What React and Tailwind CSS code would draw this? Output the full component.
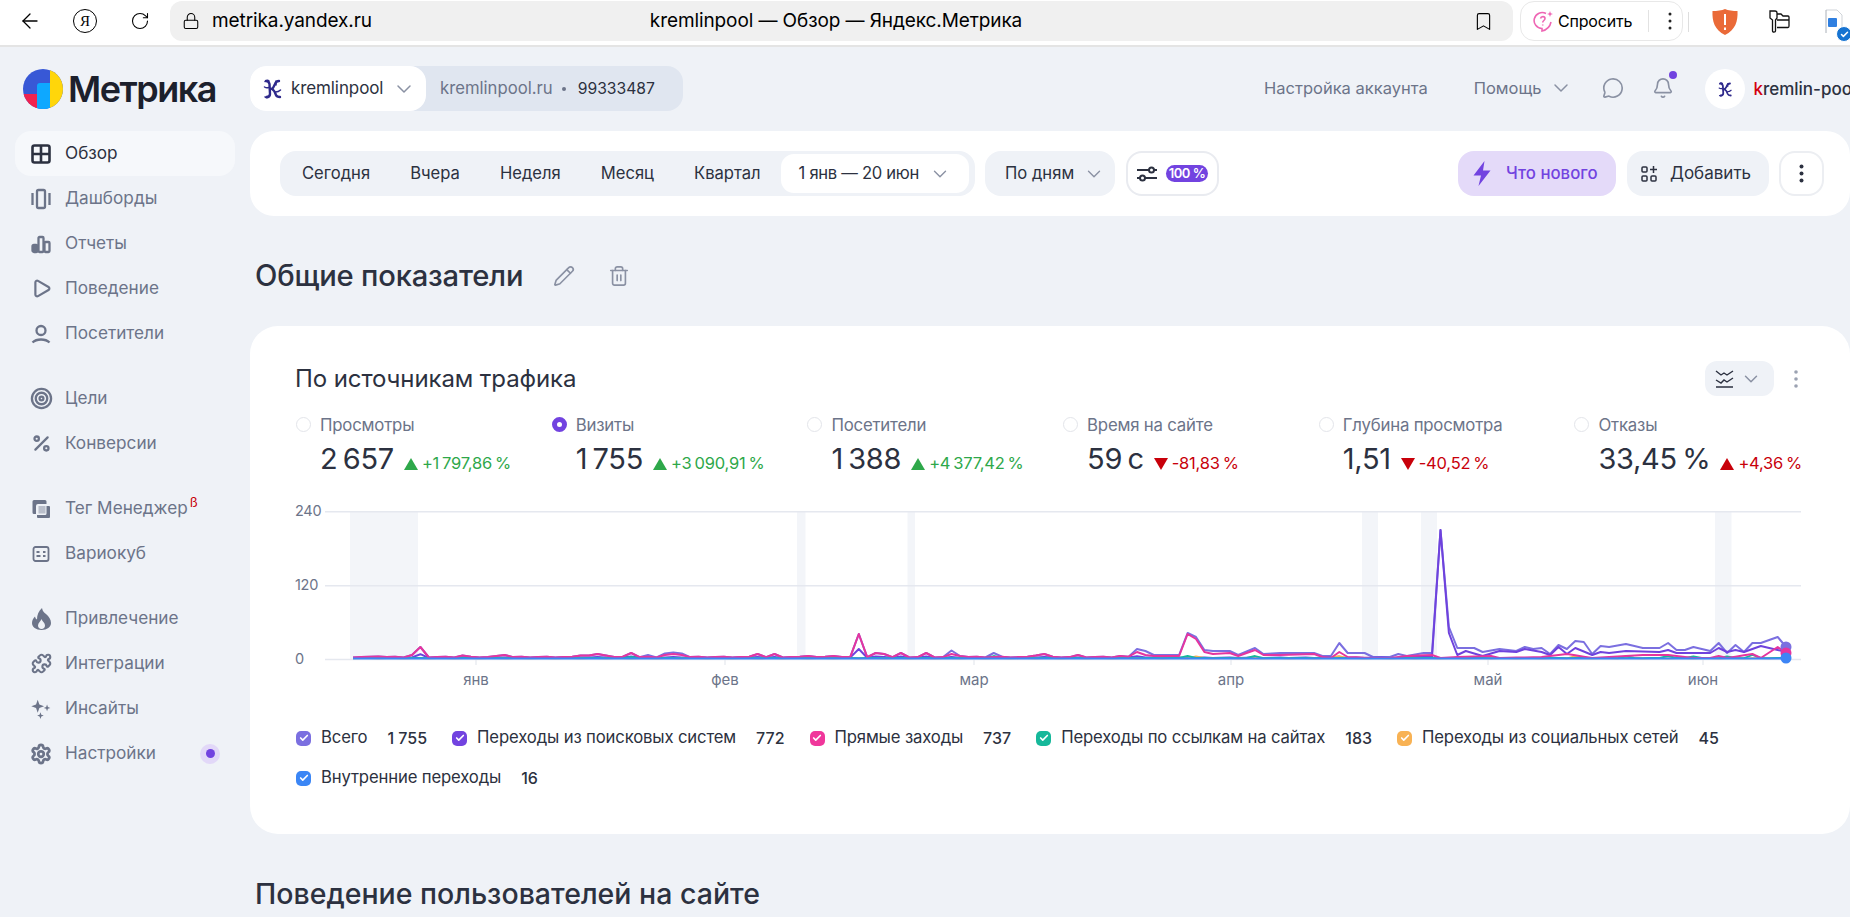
import React from "react";
import {
  ArrowLeft, RotateCw, Lock, Bookmark, ChevronDown, MessageCircle, Bell, Pencil, Trash2,
  Play, Target, Percent, Puzzle, Settings, Check,
} from "lucide-react";

const z6 = (x) => x / 1.96 + 280;
const z7 = (x) => x / 1.96 + 1050;
const X0 = 353;
const STEP = 8.43;
const DAYS = 171;
const idx = (x) => Math.max(0, Math.min(DAYS - 1, Math.round((x - X0) / STEP)));

function series(spikes, late, base, jitter) {
  const h = Array.from({ length: DAYS }, (_, i) => base + ((i * 7) % 3) * jitter);
  spikes.forEach(([x, v]) => {
    h[idx(x)] = v;
  });
  for (let a = 0; a < late.length - 1; a++) {
    const i0 = idx(late[a][0]);
    const i1 = idx(late[a + 1][0]);
    for (let i = i0; i <= i1; i++) {
      const t = i1 === i0 ? 0 : (i - i0) / (i1 - i0);
      h[i] = late[a][1] + (late[a + 1][1] - late[a][1]) * t;
    }
  }
  return h.map((v, i) => `${(X0 + i * STEP - 325).toFixed(1)},${(148 - v).toFixed(1)}`).join(" ");
}

const earlyPink = [
  [z6(160), 2], [z6(195), 2.5], [z6(255), 4], [z6(277), 12], [z6(360), 3.5], [z6(440), 4], [z6(425), 3], [z6(585), 3.5], [z6(605), 3.5],
  [z6(625), 5], [z6(640), 3.5], [z6(690), 6], [z6(750), 4], [z6(765), 5], [z6(785), 4], [z6(938), 5], [z6(970), 5], [z6(1035), 3],
  [z6(1085), 3], [z6(1137), 25], [z6(1170), 6], [z6(1185), 5], [z6(1218), 6], [z6(1268), 6], [z6(1318), 5], [z6(1335), 3],
  [z6(1480), 3.5], [z6(1495), 5], [z6(1565), 5], [z7(55), 4], [z7(140), 3], [z7(175), 7], [z7(190), 4],
];
const earlyTotal = [
  ...earlyPink, [z6(720), 4], [z6(750), 5.5], [z6(765), 6.5], [z6(785), 5.5], [z6(1318), 8.5], [z6(1400), 6],
  [z7(175), 10], [z7(190), 8],
];
const lateTotal = [
  [z7(205), 4], [z7(250), 4], [z7(270), 26], [z7(288), 22], [z7(305), 9], [z7(320), 8], [z7(350), 8], [z7(370), 4], [z7(405), 11], [z7(425), 5], [z7(450), 6],
  [z7(510), 6], [z7(530), 3], [z7(550), 3], [z7(568), 16], [z7(590), 6], [z7(610), 6], [z7(625), 2], [z7(660), 2], [z7(685), 5], [z7(700), 3], [z7(730), 6],
  [z7(750), 6], [z7(767), 129], [z7(783), 32], [z7(800), 11], [z7(830), 11], [z7(850), 7], [z7(880), 10], [z7(910), 8], [z7(930), 12], [z7(950), 10],
  [z7(965), 11], [z7(980), 5], [z7(998), 14], [z7(1015), 10], [z7(1033), 18], [z7(1050), 17], [z7(1065), 5], [z7(1082), 13], [z7(1100), 12], [z7(1130), 15],
  [z7(1165), 11], [z7(1195), 11], [z7(1212), 16], [z7(1230), 9], [z7(1247), 9], [z7(1262), 12], [z7(1295), 8], [z7(1312), 16], [z7(1330), 6], [z7(1347), 14],
  [z7(1365), 7], [z7(1380), 16], [z7(1395), 16], [z7(1425), 22], [z7(1443), 12],
];
const lateSearch = [
  [z7(700), 2], [z7(730), 2], [z7(750), 2], [z7(767), 129], [z7(783), 26], [z7(800), 4], [z7(815), 8], [z7(850), 3], [z7(880), 8], [z7(910), 7], [z7(930), 10],
  [z7(965), 7], [z7(980), 4], [z7(998), 12], [z7(1015), 5], [z7(1033), 11], [z7(1065), 4], [z7(1082), 7], [z7(1100), 6], [z7(1130), 8], [z7(1195), 7],
  [z7(1212), 9], [z7(1230), 6], [z7(1295), 6], [z7(1312), 11], [z7(1330), 7], [z7(1347), 9], [z7(1365), 7], [z7(1395), 13], [z7(1443), 7],
];
const latePink = [
  [z7(205), 3], [z7(250), 3], [z7(270), 25], [z7(288), 20], [z7(305), 7], [z7(320), 5], [z7(350), 6], [z7(370), 3], [z7(405), 9], [z7(425), 4], [z7(450), 4],
  [z7(510), 5], [z7(530), 2], [z7(550), 1], [z7(568), 7], [z7(590), 2], [z7(625), 1], [z7(660), 1], [z7(700), 3], [z7(750), 4], [z7(767), 1],
  [z7(800), 2], [z7(860), 3], [z7(880), 1], [z7(960), 2], [z7(1015), 5], [z7(1065), 1], [z7(1165), 4], [z7(1212), 4], [z7(1262), 1], [z7(1295), 1], [z7(1312), 3],
  [z7(1330), 1], [z7(1380), 5], [z7(1395), 1], [z7(1425), 12], [z7(1443), 6],
];
const TOTAL = series(earlyTotal, lateTotal, 1.5, 0.4);
const SEARCH = series(earlyPink.map(([x, v]) => [x, Math.max(1, v * 0.4)]), lateSearch, 1, 0.3);
const PINK = series(earlyPink, latePink, 1.5, 0.4);
const GREEN = series([[z6(690), 2], [z6(1400), 3], [z7(268), 3], [z7(405), 3], [z7(1130), 2.5], [z7(1212), 3], [z7(1262), 2.5], [z7(1330), 2.5], [z7(1380), 4]], [], 0.8, 0.2);
const ORANGE = series([[z7(290), 2.5], [z7(568), 3], [z7(1030), 3], [z7(1130), 2]], [], 0.6, 0.2);
const BLUE = series([], [], 0.5, 0);

const bands = [[350, 418], [797, 805.5], [907.5, 915], [1362, 1378], [1421, 1437], [1715, 1731.5]];
const ticks = [476, 725, 974, 1231, 1488, 1703];

const ic = "shrink-0";

const I = {
  grid: (
    <svg width="20" height="20" viewBox="0 0 20 20" className={ic} fill="none" stroke="#2c3140" strokeWidth="2.6">
      <rect x="1.5" y="1.5" width="17" height="17" rx="2" />
      <path d="M10 2v16M2 10h16" />
    </svg>
  ),
  dash: (
    <svg width="22" height="22" viewBox="0 0 22 22" className={ic} fill="none" stroke="#6c7489" strokeWidth="2.3">
      <rect x="7" y="2" width="8" height="18" rx="1.5" />
      <path d="M2.5 5v12M19.5 5v12" />
    </svg>
  ),
  bars: (
    <svg width="20" height="20" viewBox="0 0 20 20" className={ic} fill="none" stroke="#6c7489" strokeWidth="2.3">
      <rect x="1.5" y="11" width="5" height="7" rx="1.5" fill="#6c7489" />
      <rect x="7.5" y="3" width="5" height="15" rx="1" />
      <rect x="13.5" y="8" width="5" height="10" rx="1" />
    </svg>
  ),
  user: (
    <svg width="20" height="20" viewBox="0 0 20 20" className={ic} fill="none" stroke="#6c7489" strokeWidth="2.3">
      <circle cx="10" cy="6.500" r="4.500" />
      <path d="M1.500 18.500c2-2 5-3 8.500-3s6.500 1 8.500 3" />
    </svg>
  ),
  tag: (
    <svg width="20" height="20" viewBox="0 0 20 20" className={ic} fill="#6c7489">
      <path d="M3 1h11a1.500 1.500 0 0 1 1.500 1.500V5H7a2 2 0 0 0-2 2v8H3a1.500 1.500 0 0 1-1.500-1.500v-11A1.500 1.500 0 0 1 3 1z" />
      <path d="M7 7h11a1 1 0 0 1 1 1v10a1 1 0 0 1-1 1H7a1 1 0 0 1-1-1v-2h8a1.500 1.500 0 0 0 1.500-1.500V7z" />
      <rect x="7.500" y="7" width="7" height="7.500" fill="#6c7489" opacity="0.4" />
    </svg>
  ),
  vario: (
    <svg width="18" height="18" viewBox="0 0 18 18" className={ic} fill="none" stroke="#6c7489" strokeWidth="1.800">
      <rect x="1.500" y="2" width="15" height="14" rx="2" />
      <path d="M4.500 7h3M11 7h2.500M4.500 11h4M11 11h2.500" />
    </svg>
  ),
  flame: (
    <svg width="21" height="22" viewBox="0 0 21 22" className={ic}>
      <path d="M11 0c.6 3.500 2.200 4.500 4 6 3 2.500 5 5.500 5 9 0 4-4 7-9.500 7S1 19 1 15c0-3 1.500-5 3-6.500.3 1.500 1 2.500 2 3C6 7 7.500 3 11 0z" fill="#6c7489" />
      <path d="M10.500 11c.5 2 3.500 3.500 3.500 6.500 0 2-1.500 3.500-3.500 3.500S7 19.500 7 17.500c0-2.500 2.500-4 3.500-6.500z" fill="#eff2f7" />
    </svg>
  ),
  spark: (
    <svg width="22" height="22" viewBox="0 0 20 20" className={ic} fill="#6c7489">
      <path d="M7 1.500l1.500 4.300L12.800 7.500 8.500 9.200 7 13.500 5.500 9.200 1.200 7.500l4.300-1.700z" />
      <path d="M15.500 6l.8 2.200 2.200.8-2.200.8-.8 2.200-.8-2.200-2.200-.8 2.200-.8z" />
      <path d="M9.500 13l.8 2.200 2.200.8-2.200.8-.8 2.200-.8-2.200-2.200-.8 2.200-.8z" />
    </svg>
  ),
};

const nav = [
  [
    ["Обзор", I.grid, true],
    ["Дашборды", I.dash],
    ["Отчеты", I.bars],
    ["Поведение", <Play size={21} strokeWidth={2.5} className={ic} />],
    ["Посетители", I.user],
  ],
  [
    ["Цели", <Target size={23} strokeWidth={2.4} className={ic} />],
    ["Конверсии", <Percent size={21} strokeWidth={2.6} className={ic} />],
  ],
  [
    ["Тег Менеджер", I.tag, false, "ß"],
    ["Вариокуб", I.vario],
  ],
  [
    ["Привлечение", I.flame],
    ["Интеграции", <Puzzle size={21} strokeWidth={2.4} className={ic} />],
    ["Инсайты", I.spark],
    ["Настройки", <Settings size={22} strokeWidth={3} className={ic} />, false, null, true],
  ],
];

function KLogo({ size = 20 }) {
  return (
    <svg width={size} height={size + 2} viewBox="0 0 20 22" fill="none" stroke="#2f2a8c" strokeWidth="2.400" strokeLinecap="round" className="shrink-0">
      <path d="M3 3c2 0 3 1 3.500 3L7 16c0 2-1.500 3-3.500 3" />
      <path d="M2 3.500c1.500-1.500 3-1.500 4-.5M2 19c1.500 1 3 .8 4-.5" strokeWidth="1.500" />
      <path d="M7 11c3 0 3-1 5-5 .7-2 2-3 4-3" />
      <path d="M9 11c2 1 3 3 4 6 .600 1.500 2 2 4 2" />
      <path d="M1.500 9c1.500 1 3 1 4 .5M13 3v4M12.500 14c2 0 3.500-.5 5-2" strokeWidth="1.500" />
    </svg>
  );
}

function Logo() {
  return (
    <svg width="40" height="40" viewBox="0 0 40 40" className="shrink-0">
      <defs>
        <clipPath id="lc"><circle cx="20" cy="20" r="20" /></clipPath>
      </defs>
      <g clipPath="url(#lc)">
        <rect width="40" height="40" fill="#3858d6" />
        <rect y="25" width="14" height="15" fill="#f0234f" />
        <rect x="27" width="13" height="40" fill="#ffd60a" />
        <path d="M14 40V17a3 3 0 0 1 3-3h10v26z" fill="#0ea8ff" />
      </g>
    </svg>
  );
}

function Diff({ up, good, value }) {
  const color = good ? "text-[#2ea84a]" : "text-[#c8000a]";
  return (
    <span className={`flex items-center gap-[4px] text-[16.500px] mt-[9px] tracking-[-0.2px] [word-spacing:-1.500px] ${color}`}>
      <svg width="14" height="14" viewBox="0 0 14 14" fill="currentColor" className="shrink-0">
        {up ? <path d="M7 1 14 13H0z" /> : <path d="M7 13 14 1H0z" />}
      </svg>
      {value}
    </span>
  );
}

function Metric({ label, value, diff, up, good, active }) {
  return (
    <div className="w-[255.700px] shrink-0 pl-[24px] relative">
      <span
        className={
          active
            ? "absolute left-0 top-[5px] w-[15px] h-[15px] rounded-full border-[5px] border-[#7243e0] bg-white"
            : "absolute left-0 top-[5px] w-[15px] h-[15px] rounded-full border border-[#e3e5ea] bg-white"
        }
      />
      <div className="h-[26px] leading-[26px] text-[16.800px] text-[#6c7489] whitespace-nowrap tracking-[-0.2px]">{label}</div>
      <div className="flex items-center gap-[10px] h-[42px] whitespace-nowrap">
        <span className="text-[29px] text-[#2c3140] tracking-[-0.3px] [word-spacing:-2.500px]">{value}</span>
        <Diff up={up} good={good} value={diff} />
      </div>
    </div>
  );
}

function Legend({ color, label, value }) {
  return (
    <div className="flex items-center h-[24px] whitespace-nowrap">
      <span className={`flex items-center justify-center w-[15px] h-[15px] rounded-[5px] text-white ${color}`}>
        <Check size={10} strokeWidth={4} />
      </span>
      <span className="ml-[10px] text-[16.700px] text-[#2c3140] tracking-[-0.15px]">{label}</span>
      <span className="ml-[20px] text-[16px] font-medium text-[#2c3140]">{value}</span>
    </div>
  );
}

export default function App() {
  return (
    <div className="w-[1850px] h-[917px] overflow-hidden flex flex-col bg-[#eff2f7] font-['Inter','Noto_Sans',sans-serif] text-[#2c3140]">
      {/* browser bar */}
      <div className="h-[47px] shrink-0 bg-white border-b-2 border-[#e4e4e4] flex items-start pt-[1px] text-black">
        <ArrowLeft size={24} strokeWidth={1.3} className="ml-[18px] mt-[8px] shrink-0" />
        <span className="ml-[31px] mt-[8px] w-[24px] h-[24px] rounded-full border border-black flex items-center justify-center text-[15px] font-['Liberation_Serif',serif] shrink-0">Я</span>
        <RotateCw size={20} strokeWidth={1.3} className="ml-[33px] mt-[10px] shrink-0" />
        <div className="ml-[20px] w-[1343px] h-[40px] rounded-[12px] bg-[#f0f0f0] flex items-center pl-[12px] shrink-0">
          <Lock size={18} strokeWidth={1.4} className="shrink-0" />
          <span className="ml-[12px] text-[19px] tracking-[-0.1px]">metrika.yandex.ru</span>
          <span className="ml-[278px] text-[19px] tracking-[-0.1px] whitespace-nowrap">kremlinpool — Обзор — Яндекс.Метрика</span>
          <Bookmark size={21} strokeWidth={1.3} className="ml-auto mr-[19px] shrink-0" />
        </div>
        <div className="ml-[7px] w-[163px] h-[40px] shrink-0 rounded-[14px] border border-[#e8e8e8] flex items-center pl-[12px]">
          <svg width="21" height="22" viewBox="0 0 21 22" fill="none" stroke="#ee66b4" strokeWidth="1.600" className="shrink-0">
            <path d="M13 3.500A8 8 0 1 0 9 18.500v2.500c4-1 8-4 9-9" />
            <path d="M7.500 8.500c.5-2.500 4.500-2.500 4.500 0 0 2-2.300 2-2.300 4M9.700 14.500v1" />
            <path d="M17 1l.8 2.200L20 4l-2.200.8L17 7l-.8-2.200L14 4l2.200-.8z" fill="#ee66b4" stroke="none" />
          </svg>
          <span className="ml-[4px] text-[16px] tracking-[-0.2px]">Спросить</span>
          <span className="ml-[16px] w-px h-[22px] bg-[#e2e2e2]" />
          <svg width="4" height="18" viewBox="0 0 4 18" fill="#222" className="ml-[19px]">
            <circle cx="2" cy="2" r="1.500" /><circle cx="2" cy="9" r="1.500" /><circle cx="2" cy="16" r="1.500" />
          </svg>
        </div>
        <span className="ml-[5px] mt-[11px] w-px h-[20px] bg-[#dedede] shrink-0" />
        <svg width="26" height="26" viewBox="0 0 26 26" className="ml-[23px] mt-[8px] shrink-0">
          <path d="M13 0c3 1.500 8 2 12.500 2 .5 10-2 19-12.500 24C2.500 21 0 12 .5 2 5 2 10 1.500 13 0z" fill="#ea6a38" />
          <path d="M12 5h2v11h-2zM12 18.500h2v2.500h-2z" fill="#fff" />
        </svg>
        <svg width="22" height="24" viewBox="0 0 22 24" fill="none" stroke="#111" strokeWidth="1.300" className="ml-[30px] mt-[9px] shrink-0">
          <path d="M2 1h5c1.500 0 2 1 2 2v5l-1.500 2v11c0 1.500-3 1.500-3 0V10L2 8V3c0-1 0-2 0-2z" />
          <path d="M9 4h4l2 2h5c1 0 1 .5 1 1v9c0 1-.5 1.500-1 1.500H9M9 10h12" />
        </svg>
        <div className="ml-[35px] mt-[8px] w-[26px] h-[32px] relative shrink-0">
          <svg width="18" height="26" viewBox="0 0 18 26" fill="none" className="absolute left-0 top-0">
            <path d="M1 1h11l5 5v17" stroke="#cfd3d8" strokeWidth="1" />
            <path d="M1 1v23" stroke="#aab0b8" strokeWidth="1" />
            <rect x="3" y="9" width="9" height="9" rx="1" fill="#2f7fe0" />
          </svg>
          <span className="absolute left-[11px] top-[17px] w-[16px] h-[16px] rounded-full bg-[#1673d1] border border-white flex items-center justify-center text-white">
            <Check size={9} strokeWidth={4} />
          </span>
        </div>
      </div>

      {/* body */}
      <div className="flex flex-1 min-h-0">
        <aside className="w-[250px] shrink-0 flex flex-col">
          <div className="flex items-center h-[84px] pl-[23px] gap-[5px]">
            <Logo />
            <span className="text-[36px] font-semibold text-[#1c202c] tracking-[-1.500px]">Метрика</span>
          </div>
          <nav className="w-[220px] ml-[15px] flex flex-col gap-[20px]">
            {nav.map((group, g) => (
              <div key={g} className="flex flex-col">
                {group.map(([label, icon, active, sup, dot]) => (
                  <div
                    key={label}
                    className={
                      active
                        ? "h-[45px] flex items-center pl-[15px] rounded-[16px] bg-[#f6f8fb] text-[#2c3140]"
                        : "h-[45px] flex items-center pl-[15px] rounded-[16px] text-[#6c7489]"
                    }
                  >
                    <span className="w-[22px] flex justify-center shrink-0">{icon}</span>
                    <span className="ml-[13px] mb-[2px] text-[17.200px] font-normal whitespace-nowrap">{label}</span>
                    {sup && <span className="ml-[2px] -mt-[12px] text-[13px] text-[#c8000a] leading-none">{sup}</span>}
                    {dot && (
                      <span className="ml-auto mr-[15px] w-[20px] h-[20px] rounded-full bg-[#e2d8f8] flex items-center justify-center">
                        <span className="w-[9px] h-[9px] rounded-full bg-[#7243e0]" />
                      </span>
                    )}
                  </div>
                ))}
              </div>
            ))}
          </nav>
        </aside>

        <main className="w-[1600px] shrink-0 flex flex-col">
          {/* header */}
          <div className="h-[84px] shrink-0 flex items-start pt-[19px] whitespace-nowrap overflow-hidden">
            <div className="w-[433px] h-[45px] rounded-[16px] bg-[#e0e6f0] flex items-center shrink-0">
              <div className="w-[176px] h-[45px] rounded-[16px] bg-white flex items-center pl-[13px] shrink-0">
                <KLogo />
                <span className="ml-[8px] text-[17px] tracking-[-0.1px]">kremlinpool</span>
                <ChevronDown size={24} strokeWidth={1.5} className="ml-[9px] text-[#8a91a3]" />
              </div>
              <span className="ml-[14px] text-[16.700px] text-[#6c7489]">kremlinpool.ru</span>
              <span className="ml-[9px] w-[4px] h-[4px] rounded-full bg-[#6c7489]" />
              <span className="ml-[12px] text-[15.700px]">99333487</span>
            </div>
            <span className="ml-[581px] mt-[10px] text-[16.500px] text-[#6c7489] shrink-0">Настройка аккаунта</span>
            <span className="ml-[46px] mt-[10px] text-[16.500px] text-[#6c7489] shrink-0">Помощь</span>
            <ChevronDown size={24} strokeWidth={1.5} className="ml-[8px] mt-[10px] text-[#8a91a3] shrink-0" />
            <MessageCircle size={22} strokeWidth={1.8} className="ml-[29px] mt-[11px] text-[#8a91a3] shrink-0" />
            <div className="relative ml-[28px] mt-[11px] shrink-0 w-[22px] h-[24px]">
              <Bell size={22} strokeWidth={1.8} className="text-[#8a91a3]" />
              <span className="absolute -right-[3px] -top-[6px] w-[8px] h-[8px] rounded-full bg-[#7243e0]" />
            </div>
            <span className="ml-[31px] mt-[3px] w-[40px] h-[40px] rounded-full bg-white flex items-center justify-center shrink-0">
              <KLogo size={15} />
            </span>
            <span className="ml-[8px] mt-[11px] text-[17px] font-medium shrink-0">
              <span className="text-[#d4000f]">k</span>remlin-pool
            </span>
          </div>

          {/* filter card */}
          <div className="h-[85px] shrink-0 bg-white rounded-[24px] flex items-center pl-[30px] pr-[26px]">
            <div className="w-[695px] h-[45px] rounded-[16px] bg-[#eff2f7] flex items-center pl-[22px] gap-[40px] shrink-0 text-[16.600px]">
              <span>Сегодня</span>
              <span>Вчера</span>
              <span>Неделя</span>
              <span>Месяц</span>
              <span>Квартал</span>
              <div className="-ml-[23px] w-[194px] shrink-0 h-[45px] rounded-[16px] bg-white border-[3px] border-[#eff2f7] flex items-center pl-[18px] whitespace-nowrap">
                <span className="tracking-[-0.3px]">1 янв — 20 июн</span>
                <ChevronDown size={22} strokeWidth={1.5} className="ml-[10px] text-[#8a91a3]" />
              </div>
            </div>
            <div className="ml-[10px] w-[130px] h-[45px] rounded-[16px] bg-[#eff2f7] flex items-center pl-[20px] text-[16.600px] shrink-0">
              <span>По дням</span>
              <ChevronDown size={22} strokeWidth={1.5} className="ml-[9px] text-[#8a91a3]" />
            </div>
            <div className="ml-[11px] w-[93px] h-[45px] rounded-[16px] border-2 border-[#e9ebf0] flex items-center pl-[8px] shrink-0">
              <svg width="22" height="18" viewBox="0 0 22 18" fill="none" stroke="#2c3140" strokeWidth="2" className="shrink-0">
                <path d="M1 5h12M18 5h3M1 13h3M9 13h12" />
                <circle cx="15.500" cy="5" r="2.500" />
                <circle cx="6.500" cy="13" r="2.500" />
              </svg>
              <span className="ml-[8px] w-[42px] h-[17px] rounded-full bg-[#7243e0] text-white text-[13px] font-semibold flex items-center justify-center tracking-[-0.5px]">100 %</span>
            </div>
            <div className="ml-auto w-[158px] h-[45px] rounded-[16px] bg-[#e4daf9] flex items-center pl-[15px] text-[#7243e0] shrink-0">
              <svg width="18" height="25" viewBox="0 0 18 25" fill="#7243e0" className="shrink-0">
                <path d="M11.500 0 .5 14.500H8L5.500 25 17.500 9.500H10z" />
              </svg>
              <span className="ml-[15px] text-[16.800px] font-medium whitespace-nowrap">Что нового</span>
            </div>
            <div className="ml-[11px] w-[142px] h-[45px] rounded-[16px] bg-[#eff2f7] flex items-center pl-[14px] shrink-0">
              <svg width="16" height="16" viewBox="0 0 16 16" fill="none" stroke="#2c3140" strokeWidth="1.500" className="shrink-0">
                <rect x="1" y="1" width="5" height="5" rx="1" />
                <rect x="1" y="10" width="5" height="5" rx="1" />
                <rect x="10" y="10" width="5" height="5" rx="1" />
                <path d="M12.500 0v7M9 3.500h7" />
              </svg>
              <span className="ml-[13px] text-[17px] whitespace-nowrap">Добавить</span>
            </div>
            <div className="ml-[10px] w-[45px] h-[45px] rounded-[16px] border-2 border-[#eceef2] flex items-center justify-center shrink-0">
              <svg width="5" height="19" viewBox="0 0 5 19" fill="#2c3140">
                <circle cx="2.500" cy="2.500" r="2" /><circle cx="2.500" cy="9.500" r="2" /><circle cx="2.500" cy="16.500" r="2" />
              </svg>
            </div>
          </div>

          {/* heading */}
          <div className="h-[110px] shrink-0 flex items-center pl-[5px] pt-[10px]">
            <h1 className="text-[29.200px] font-medium tracking-[-0.2px]">Общие показатели</h1>
            <Pencil size={22} strokeWidth={1.8} className="ml-[30px] text-[#8a91a3]" />
            <Trash2 size={22} strokeWidth={1.8} className="ml-[33px] text-[#8a91a3]" />
          </div>

          {/* card */}
          <section className="h-[508px] shrink-0 bg-white rounded-[28px] pl-[45px] pt-[35px] flex flex-col">
            <div className="h-[35px] flex items-center shrink-0 pr-[52px]">
              <h2 className="text-[24px] font-normal tracking-[-0.1px]">По источникам трафика</h2>
              <div className="ml-auto w-[69px] h-[35px] rounded-[12px] bg-[#eff2f7] flex items-center pl-[10px]">
                <svg width="19" height="20" viewBox="0 0 19 20" fill="none" stroke="#2c3140" strokeWidth="1.400" className="shrink-0">
                  <path d="M1 2l5 4 3-2 3 2 6-4M1 11l5 3 3-3 3 2 6-4M1 18h17" />
                </svg>
                <ChevronDown size={22} strokeWidth={1.6} className="ml-[6px] text-[#8a91a3]" />
              </div>
              <svg width="4" height="18" viewBox="0 0 4 18" fill="#9ba2b2" className="ml-[20px]">
                <circle cx="2" cy="2" r="1.800" /><circle cx="2" cy="9" r="1.800" /><circle cx="2" cy="16" r="1.800" />
              </svg>
            </div>

            <div className="flex mt-[16px] shrink-0 pl-[1px]">
              <Metric label="Просмотры" value="2 657" diff="+1 797,86 %" up good />
              <Metric label="Визиты" value="1 755" diff="+3 090,91 %" up good active />
              <Metric label="Посетители" value="1 388" diff="+4 377,42 %" up good />
              <Metric label="Время на сайте" value="59 с" diff="-81,83 %" />
              <Metric label="Глубина просмотра" value="1,51" diff="-40,52 %" />
              <Metric label="Отказы" value="33,45 %" diff="+4,36 %" up />
            </div>

            {/* chart */}
            <div className="flex mt-[31px] shrink-0">
              <div className="w-[30px] h-[168px] -mt-[10px] flex flex-col justify-between text-[14.500px] leading-[20px] text-[#6c7489] shrink-0 tracking-[-0.3px]">
                <span>240</span>
                <span>120</span>
                <span>0</span>
              </div>
              <svg width="1476" height="159" viewBox="0 0 1476 159" fill="none" className="shrink-0 overflow-visible">
                {bands.map(([a, b]) => (
                  <rect key={a} x={a - 325} y="0" width={b - a} height="148" fill="#f3f5f9" />
                ))}
                <path d="M0 .75H1476M0 74.750H1476M0 148.500H1476" stroke="#e5e8ef" strokeWidth="1.500" />
                {ticks.map((t) => (
                  <path key={t} d={`M${t - 325} 149V154`} stroke="#dfe3ea" strokeWidth="1" />
                ))}
                <polyline points={TOTAL} stroke="#7b6fe0" strokeWidth="2" strokeLinejoin="round" />
                <polyline points={SEARCH} stroke="#6f42dd" strokeWidth="2" strokeLinejoin="round" />
                <polyline points={ORANGE} stroke="#f8b254" strokeWidth="1.800" strokeLinejoin="round" />
                <polyline points={GREEN} stroke="#14b89a" strokeWidth="1.800" strokeLinejoin="round" />
                <polyline points={PINK} stroke="#e5359f" strokeWidth="2" strokeLinejoin="round" />
                <polyline points={BLUE} stroke="#3d85f5" strokeWidth="1.800" strokeLinejoin="round" />
                <circle cx="1461" cy="136" r="5.500" fill="#7b6fe0" />
                <circle cx="1461" cy="142" r="5.500" fill="#e5359f" />
                <circle cx="1461" cy="147" r="5.500" fill="#3d85f5" />
              </svg>
            </div>
            <div className="flex h-[20px] shrink-0 text-[15px] leading-[20px] text-[#6c7489] pl-[151px]">
              <span className="w-[60px] text-center">янв</span>
              <span className="w-[60px] ml-[189px] text-center">фев</span>
              <span className="w-[60px] ml-[189px] text-center">мар</span>
              <span className="w-[60px] ml-[197px] text-center">апр</span>
              <span className="w-[60px] ml-[197px] text-center">май</span>
              <span className="w-[60px] ml-[155px] text-center">июн</span>
            </div>

            {/* legend */}
            <div className="flex flex-col gap-[16px] mt-[36px] pl-[1px]">
              <div className="flex gap-x-[25px]">
                <Legend color="bg-[#7b6fe0]" label="Всего" value="1 755" />
                <Legend color="bg-[#7243e0]" label="Переходы из поисковых систем" value="772" />
                <Legend color="bg-[#f0379b]" label="Прямые заходы" value="737" />
                <Legend color="bg-[#16b89a]" label="Переходы по ссылкам на сайтах" value="183" />
                <Legend color="bg-[#f8b254]" label="Переходы из социальных сетей" value="45" />
              </div>
              <div className="flex">
                <Legend color="bg-[#3b86f5]" label="Внутренние переходы" value="16" />
              </div>
            </div>
          </section>

          <h2 className="mt-[40px] pl-[5px] text-[28.500px] font-medium leading-[40px] whitespace-nowrap">Поведение пользователей на сайте</h2>
        </main>
      </div>
    </div>
  );
}
